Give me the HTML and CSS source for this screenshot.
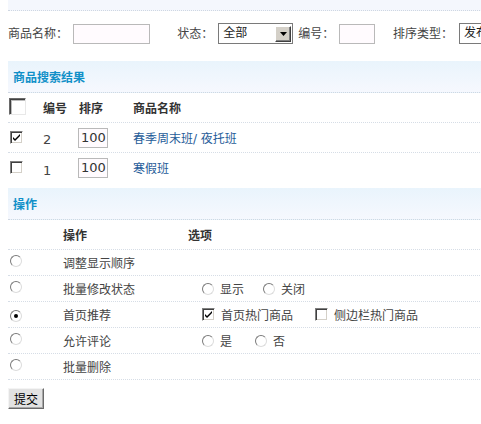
FILE: index.html
```html
<!DOCTYPE html>
<html lang="zh">
<head>
<meta charset="utf-8">
<title>商品搜索</title>
<link rel="stylesheet" href="styles.css">
</head>
<body>
<div class="wrap">
  <div class="topband"></div>

  <div class="search">
    <span class="lbl">商品名称：</span>
    <span class="input w-name"></span>
    <span class="lbl l-status">状态：</span>
    <span class="select w-status"><span class="sel-text">全部</span><span class="sel-btn"><svg width="7" height="4" viewBox="0 0 7 4"><path d="M0 0h7L3.5 4z" fill="#000"/></svg></span></span>
    <span class="lbl l-num">编号：</span>
    <span class="input w-num"></span>
    <span class="lbl l-sort">排序类型：</span>
    <span class="select w-sort"><span class="sel-text">发布时间</span><span class="sel-btn"><svg width="7" height="4" viewBox="0 0 7 4"><path d="M0 0h7L3.5 4z" fill="#000"/></svg></span></span>
  </div>

  <div class="band"><span class="band-title">商品搜索结果</span></div>

  <div class="grid-row head">
    <span class="cell"><span class="cb big"></span></span>
    <span class="cell">编号</span>
    <span class="cell c-sort">排序</span>
    <span class="cell">商品名称</span>
  </div>
  <div class="grid-row">
    <span class="cell"><span class="cb checked"><svg width="9" height="9" viewBox="0 0 9 9"><path d="M1 4l2 2 5-5v2L3 8 1 6z" fill="#000"/></svg></span></span>
    <span class="cell num">2</span>
    <span class="cell"><span class="input w-order">100</span></span>
    <span class="cell"><a class="link" href="#">春季周末班/ 夜托班</a></span>
  </div>
  <div class="grid-row last">
    <span class="cell"><span class="cb"></span></span>
    <span class="cell num">1</span>
    <span class="cell"><span class="input w-order">100</span></span>
    <span class="cell"><a class="link" href="#">寒假班</a></span>
  </div>

  <div class="band"><span class="band-title">操作</span></div>

  <div class="op-row head">
    <span class="cell"></span>
    <span class="cell">操作</span>
    <span class="cell">选项</span>
  </div>
  <div class="op-row">
    <span class="cell"><span class="radio"></span></span>
    <span class="cell">调整显示顺序</span>
    <span class="cell opts"></span>
  </div>
  <div class="op-row">
    <span class="cell"><span class="radio"></span></span>
    <span class="cell">批量修改状态</span>
    <span class="cell opts">
      <span class="opt o-show"><span class="radio"></span>显示</span>
      <span class="opt"><span class="radio"></span>关闭</span>
    </span>
  </div>
  <div class="op-row">
    <span class="cell"><span class="radio on"></span></span>
    <span class="cell">首页推荐</span>
    <span class="cell opts">
      <span class="opt o-home"><span class="cb checked"><svg width="9" height="9" viewBox="0 0 9 9"><path d="M1 4l2 2 5-5v2L3 8 1 6z" fill="#000"/></svg></span>首页热门商品</span>
      <span class="opt"><span class="cb"></span>侧边栏热门商品</span>
    </span>
  </div>
  <div class="op-row">
    <span class="cell"><span class="radio"></span></span>
    <span class="cell">允许评论</span>
    <span class="cell opts">
      <span class="opt o-yes"><span class="radio"></span>是</span>
      <span class="opt"><span class="radio"></span>否</span>
    </span>
  </div>
  <div class="op-row">
    <span class="cell"><span class="radio"></span></span>
    <span class="cell">批量删除</span>
    <span class="cell opts"></span>
  </div>

  <div class="actions"><button class="btn" type="button">提交</button></div>
</div>
</body>
</html>
```

FILE: styles.css
```css
html, body {
  overflow: hidden;
}
body {
  margin: 0 0 0 8px;
  font-family: "DejaVu Sans", "Noto Sans CJK SC", sans-serif;
  font-size: 12px;
  color: #3a3a3a;
  background: #fff;
}
.wrap {
  width: 540px;
}
.topband {
  height: 10px;
  background: #f4f7fd;
  border-bottom: 1px dotted #cfd7e2;
}
.search {
  height: 50px;
  box-sizing: border-box;
  padding-top: 13px;
  display: flex;
  align-items: flex-start;
  white-space: nowrap;
}
.lbl {
  height: 20px;
  line-height: 20px;
  color: #444;
}
.input {
  display: inline-block;
  box-sizing: border-box;
  height: 20px;
  border: 1px solid #b9b9b9;
  background: #fffbfe;
  line-height: 18px;
  padding: 0 2px;
  color: #333;
  font-size: 13px;
}
.w-name { width: 78px; margin-left: 5px; }
.l-status { margin-left: 27px; }
.w-status { width: 76px; margin-left: 5px; }
.l-num { margin-left: 5px; }
.w-num { width: 36px; margin-left: 5px; }
.l-sort { margin-left: 18px; }
.w-sort { width: 90px; margin-left: 6px; }
.select {
  display: inline-flex;
  align-items: center;
  justify-content: space-between;
  box-sizing: border-box;
  height: 21px;
  margin-top: -1px;
  border: 1px solid #7a7a7a;
  box-shadow: inset 1px 1px 0 #fff;
  background: #fff;
  padding: 1px 1px 1px 4px;
  color: #222;
}
.sel-text { line-height: 17px; }
.sel-btn {
  display: inline-flex;
  align-items: center;
  justify-content: center;
  box-sizing: border-box;
  width: 16px;
  height: 16px;
  background: #d4d0c8;
  border: 1px solid;
  border-color: #fff #404040 #404040 #fff;
  box-shadow: inset -1px -1px 0 #808080;
}
.band {
  height: 31px;
  display: flex;
  align-items: center;
  padding-left: 5px;
  background: linear-gradient(#e9f4fc, #f6f8fe);
  border-bottom: 1px dotted #cfd7e2;
}
.band-title {
  font-weight: bold;
  color: #1190c8;
}
.grid-row {
  display: grid;
  grid-template-columns: 35px 35px 55px 1fr;
  height: 29px;
  align-items: center;
  border-bottom: 1px dotted #d6dde6;
}
.grid-row.head {
  height: 29px;
}
.grid-row.last {
  border-bottom: none;
  height: 35px;
  align-items: start;
  padding-top: 0;
}
.grid-row.last .cell {
  height: 29px;
  display: flex;
  align-items: center;
}
.head .cell {
  font-weight: bold;
  color: #333;
}
.c-sort { padding-left: 1px; }
.num {
  font-size: 13px;
  color: #444;
  padding-top: 3px;
}
.link {
  color: #1f5c99;
  text-decoration: none;
}
.cb {
  display: inline-flex;
  align-items: center;
  justify-content: center;
  box-sizing: border-box;
  width: 13px;
  height: 13px;
  margin-left: 2px;
  background: #fff;
  border: 1px solid;
  border-color: #808080 #fff #fff #808080;
  box-shadow: inset 1px 1px 0 #404040, inset -1px -1px 0 #d4d0c8;
}
.cb.big {
  width: 17px;
  height: 17px;
  margin-left: 1px;
  border-color: #6a6a6a #e8e8e8 #e8e8e8 #6a6a6a;
  box-shadow: inset 1px 1px 0 #404040, inset 2px 2px 0 #bcbcbc;
}
.w-order { width: 30px; }
.op-row {
  display: grid;
  grid-template-columns: 55px 125px 1fr;
  height: 25px;
  align-items: center;
  border-bottom: 1px dotted #d6dde6;
  color: #444;
}
.op-row.head {
  height: 29px;
}
.radio {
  display: inline-flex;
  align-items: center;
  justify-content: center;
  box-sizing: border-box;
  width: 12px;
  height: 12px;
  margin-left: 2px;
  border-radius: 50%;
  border: 1px solid;
  border-color: #7a7a7a #dcdcdc #dcdcdc #7a7a7a;
  background: #fff;
}
.radio.on::after {
  content: "";
  width: 4px;
  height: 4px;
  border-radius: 50%;
  background: #000;
}
.opts {
  display: flex;
  align-items: center;
  padding-left: 14px;
}
.opt {
  display: inline-flex;
  align-items: center;
  gap: 6px;
}
.opt .radio, .opt .cb { margin-left: 0; }
.o-show { margin-right: 19px; }
.o-home { margin-right: 22px; }
.o-yes { margin-right: 23px; }
.actions {
  padding-top: 8px;
}
.btn {
  box-sizing: border-box;
  width: 36px;
  height: 21px;
  padding: 0;
  font-family: "Noto Sans CJK SC", sans-serif;
  font-size: 12px;
  color: #000;
  background: #e2e2e2;
  border: 1px solid;
  border-color: #f4f4f4 #6a6a6a #6a6a6a #f4f4f4;
  box-shadow: inset -1px -1px 0 #a8a8a8;
}
```
